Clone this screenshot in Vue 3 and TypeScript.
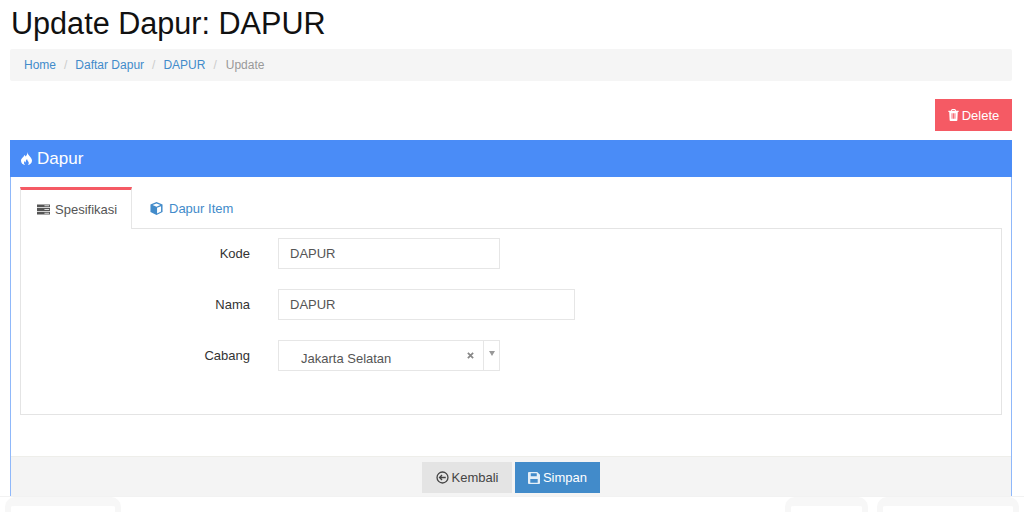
<script setup lang="ts">
const crumbs: string[] = ['Home', 'Daftar Dapur', 'DAPUR']
</script>

<template>
  <div class="page">
    <h1 class="title">Update Dapur: DAPUR</h1>
    <nav class="crumbs">
      <template v-for="c in crumbs" :key="c">
        <a class="crumb">{{ c }}</a><span class="sep">/</span>
      </template>
      <span class="current">Update</span>
    </nav>
    <div class="actions">
      <button class="btn delete">
        <svg class="ic" viewBox="0 0 12 14" width="11" height="12"><path fill="currentColor" fill-rule="evenodd" d="M4 0h4l1 2h3v1.500H11L10.500 13c0 .6-.5 1-1 1h-7c-.5 0-1-.4-1-1L1 3.500H0V2h3zM4.600 1.200L4.200 2h3.600l-.4-.8zM3.800 5v6.500h1V5zM5.500 5v6.500h1V5zM7.200 5v6.500h1V5z"/></svg>
        Delete
      </button>
    </div>
    <section class="panel">
      <header class="panel-head">
        <svg class="flame" viewBox="0 0 11 13" width="11" height="13"><path fill="#fff" fill-rule="evenodd" d="M6 0c.7 2.400-.5 3.300-1.500 4.500-.2-.7-.6-1.200-1.300-1.500C3.400 4.800 0 6 0 8.800 0 11 1.700 13 4.300 13c-1.400-1-1.700-2.400-.7-4 .3.900.6 1.300 1.200 1.500-.2-1.400.2-2.500 1.300-3.500 0 1.700 1.700 2.500 1.700 4.100 0 .8-.4 1.400-1 1.900C9.300 12.700 11 11 11 8.500 11 5.400 7.200 3.700 6 0z"/></svg>
        <span>Dapur</span>
      </header>
      <div class="panel-body">
        <div class="tabs">
          <div class="tab active">
            <svg viewBox="0 0 14 11" width="13" height="11"><path fill="#555" d="M0 0h14v3H0zM0 4h14v3H0zM0 8h14v3H0z"/><path fill="#ddd" d="M8 1h5v1H8zM8 5h5v1H8zM8 9h5v1H8z"/></svg>
            Spesifikasi
          </div>
          <div class="tab link">
            <svg viewBox="0 0 14 14" width="13" height="13"><path fill="#428bca" d="M7 0l6.500 2.800v8L7 14 .5 10.800v-8z"/><path fill="#fff" d="M7 1.600L2.800 3.300 7 5l4.200-1.700zM7.600 6.300v6l4.300-2.100V4.600z"/></svg>
            Dapur Item
          </div>
        </div>
        <div class="tab-pane">
          <div class="row">
            <label class="lbl">Kode</label>
            <input class="field short" value="DAPUR" />
          </div>
          <div class="row">
            <label class="lbl">Nama</label>
            <input class="field long" value="DAPUR" />
          </div>
          <div class="row">
            <label class="lbl">Cabang</label>
            <div class="select">
              <span class="sel-text">Jakarta Selatan</span>
              <svg class="clear" viewBox="0 0 8 8" width="7" height="7"><path stroke="#888" stroke-width="2" d="M1 1l6 6M7 1L1 7"/></svg>
              <span class="arrow"><i></i></span>
            </div>
          </div>
        </div>
      </div>
      <footer class="panel-foot">
        <button class="btn back">
          <svg class="ic" viewBox="0 0 14 14" width="13" height="13"><circle cx="7" cy="7" r="5.900" fill="none" stroke="currentColor" stroke-width="1.400"/><path fill="none" stroke="currentColor" stroke-width="1.400" d="M10.500 7H4M6.500 4.300L3.800 7l2.700 2.700"/></svg>
          Kembali
        </button>
        <button class="btn save">
          <svg class="ic" viewBox="0 0 13 13" width="12" height="12"><path fill="currentColor" fill-opacity=".85" fill-rule="evenodd" d="M1 0h9l3 3v9a1 1 0 0 1-1 1H1a1 1 0 0 1-1-1V1a1 1 0 0 1 1-1zm2 1.300v3.400h6.500V1.300zM2.500 7.500v4.200h8V7.500z"/></svg>
          Simpan
        </button>
      </footer>
    </section>
    <div class="bottom">
      <div class="ghost g1"></div>
      <div class="ghost g2"></div>
      <div class="ghost g3"></div>
    </div>
  </div>
</template>

<style>
html, body { margin: 0; overflow: hidden; background: #fff; }
</style>

<style scoped>
.page {
  width: 1024px;
  height: 512px;
  overflow: hidden;
  box-sizing: border-box;
  padding: 0 12px 0 10px;
  font-family: "Liberation Sans", Arial, sans-serif;
  font-size: 13px;
  color: #333;
  background: #fff;
}
.title {
  margin: 0;
  padding: 5px 0 0 1px;
  height: 49px;
  box-sizing: border-box;
  font-size: 30.6px;
  line-height: 36px;
  font-weight: 400;
  color: #111;
}
.crumbs {
  height: 32px;
  display: flex;
  align-items: center;
  padding-left: 14px;
  background: #f5f5f5;
  border-radius: 2px;
  font-size: 12px;
}
.crumb { color: #428bca; }
.sep { color: #ccc; padding: 0 8px; }
.current { color: #999; margin-left: 1px; }
.actions {
  display: flex;
  justify-content: flex-end;
  height: 59px;
  padding-top: 18px;
  box-sizing: border-box;
}
.btn {
  border: 0;
  font-family: inherit;
  font-size: 13px;
  display: inline-flex;
  align-items: center;
  justify-content: center;
  gap: 3px;
  padding: 0;
}
.delete {
  width: 77px;
  height: 32px;
  background: #f55a64;
  color: #fff;
}
.panel {
  border: 1px solid #8fb8fa;
  border-top: 0;
  border-bottom: 0;
}
.panel-head {
  height: 37px;
  margin: 0 -1px;
  background: #4a8cf7;
  color: #fff;
  font-size: 17px;
  display: flex;
  align-items: center;
  gap: 5px;
  padding-left: 11px;
}
.panel-body {
  height: 279px;
  box-sizing: border-box;
  padding: 10px 9px 0;
}
.tabs {
  display: flex;
  height: 42px;
  margin-bottom: -1px;
  position: relative;
}
.tab {
  width: 112px;
  height: 42px;
  box-sizing: border-box;
  display: flex;
  align-items: center;
  justify-content: flex-start;
  gap: 5px;
  font-size: 13px;
  color: #555;
  padding-bottom: 1px;
}
.tab.active {
  background: #fff;
  border-top: 3px solid #f55a64;
  border-left: 1px solid #e6e6e6;
  border-right: 1px solid #e6e6e6;
  padding-left: 16px;
  padding-top: 1px;
}
.tab.link {
  color: #428bca;
  width: 118px;
  gap: 6px;
  padding-left: 18px;
  padding-top: 2px;
}
.tab-pane {
  height: 187px;
  box-sizing: border-box;
  border: 1px solid #e4e4e4;
  padding-top: 9px;
}
.row {
  display: flex;
  align-items: center;
  height: 31px;
  margin-bottom: 20px;
}
.lbl {
  width: 229px;
  text-align: right;
  font-size: 13px;
  color: #333;
  padding-right: 28px;
  box-sizing: content-box;
  flex: none;
}
.field {
  height: 31px;
  box-sizing: border-box;
  border: 1px solid #e6e6e6;
  padding: 0 11px;
  font: 13px "Liberation Sans", Arial, sans-serif;
  color: #555;
  outline: none;
  background: #fff;
}
.short { width: 222px; }
.long { width: 297px; }
.select {
  width: 222px;
  height: 31px;
  box-sizing: border-box;
  border: 1px solid #e6e6e6;
  display: flex;
  align-items: center;
  font-size: 13px;
  color: #555;
  background: #fff;
}
.sel-text { flex: 1; padding-left: 22px; padding-top: 5px; }
.clear {
  margin-right: 9px;
  margin-top: -1px;
}
.arrow {
  width: 16px;
  height: 100%;
  border-left: 1px solid #e6e6e6;
  display: flex;
  justify-content: center;
  padding-top: 10px;
  box-sizing: border-box;
}
.arrow i {
  width: 0;
  height: 0;
  border-left: 3px solid transparent;
  border-right: 3px solid transparent;
  border-top: 5px solid #999;
}
.panel-foot {
  height: 41px;
  box-sizing: border-box;
  background: #f4f4f4;
  border-top: 1px solid #eeeeea;
  display: flex;
  justify-content: center;
  gap: 3px;
  padding: 5px 0 0 0;
}
.back {
  width: 90px;
  height: 31px;
  background: #e4e4e4;
  color: #444;
}
.save {
  width: 85px;
  height: 31px;
  background: #428bca;
  color: #fff;
}
.bottom {
  display: flex;
  border-top: 1px solid #f2f2f2;
  margin: -1px -12px 0 -10px;
  position: relative;
  height: 20px;
}
.ghost {
  position: absolute;
  top: 0;
  height: 30px;
  box-sizing: border-box;
  background: #fff;
  border: 6px solid #f7f7f7;
  border-top-width: 9px;
  border-radius: 10px 10px 0 0;
}
.g1 { left: 5px; width: 116px; }
.g2 { left: 785px; width: 83px; }
.g3 { left: 877px; width: 142px; }
</style>
